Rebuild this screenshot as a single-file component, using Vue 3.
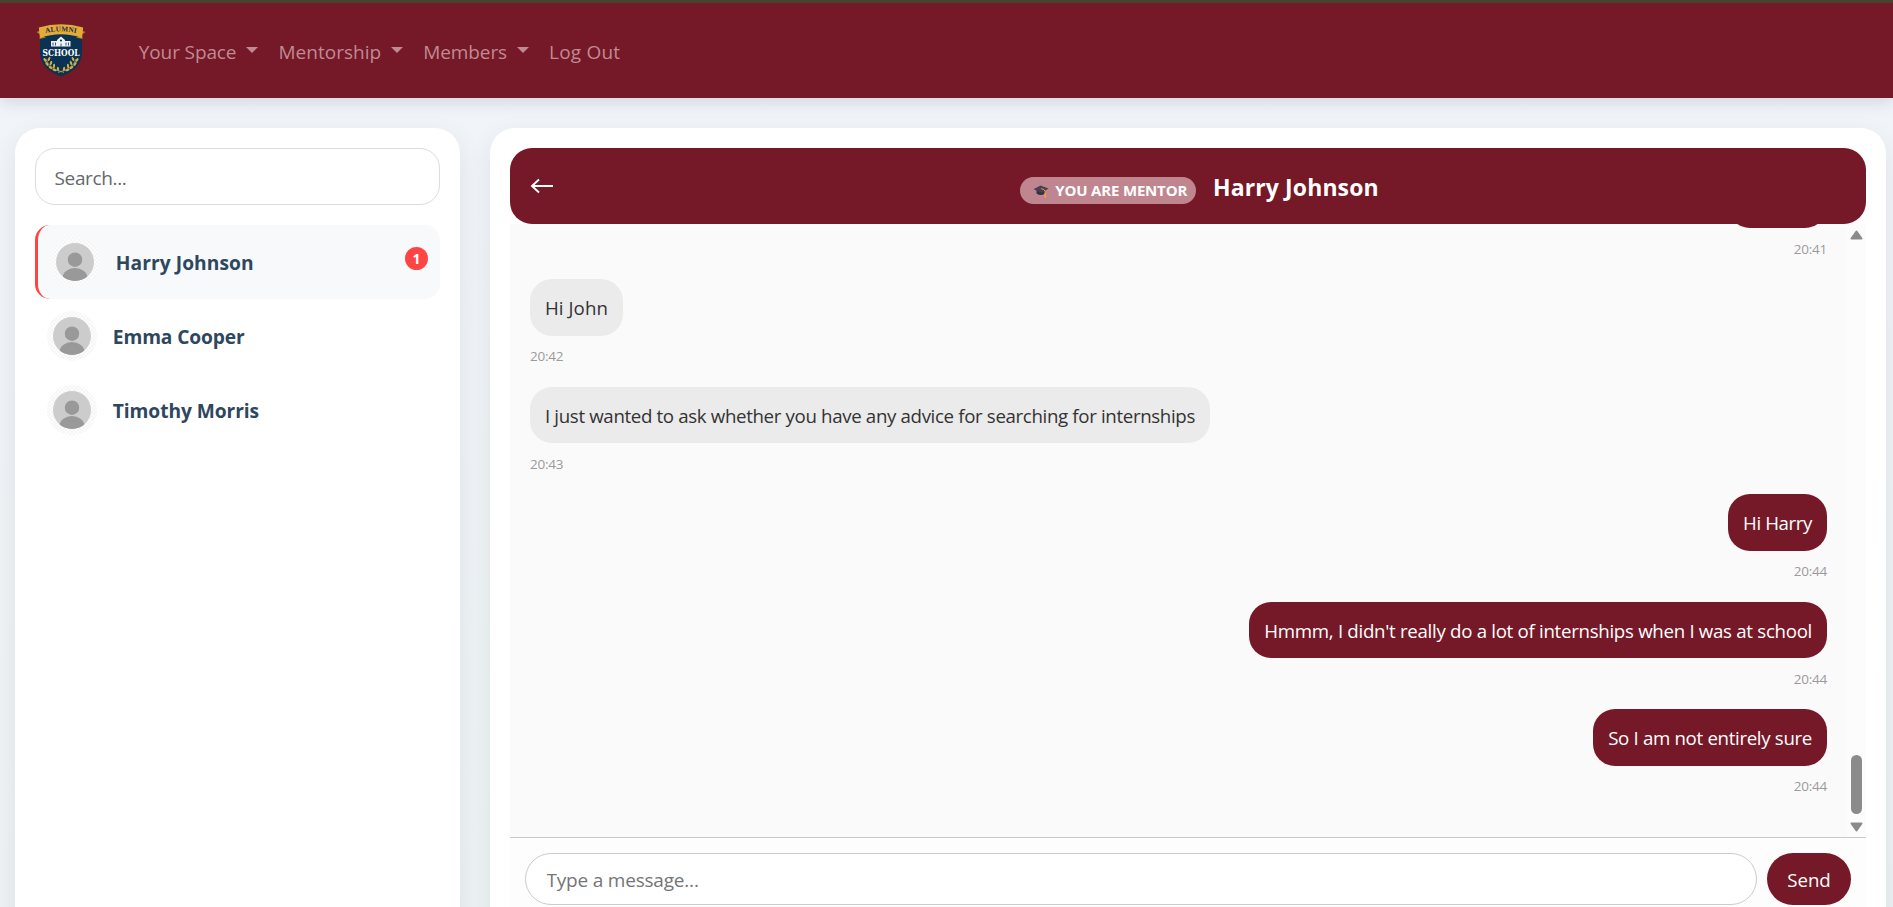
<script setup>
import { ref } from 'vue'

const navItems = [
  { label: 'Your Space', menu: true, tracking: -0.12 },
  { label: 'Mentorship', menu: true, tracking: 0.03 },
  { label: 'Members', menu: true, tracking: -0.08 },
  { label: 'Log Out', menu: false, tracking: 0.2 },
]

const contacts = [
  { name: 'Harry Johnson', unread: 1, active: true, tracking: 0.06 },
  { name: 'Emma Cooper', unread: 0, active: false, tracking: -0.12 },
  { name: 'Timothy Morris', unread: 0, active: false, tracking: -0.08 },
]

const messages = [
  { text: '', time: '20:41', mine: true, tracking: 0 },
  { text: 'Hi John', time: '20:42', mine: false, tracking: 0.06 },
  {
    text: 'I just wanted to ask whether you have any advice for searching for internships',
    time: '20:43',
    mine: false,
    tracking: -0.35,
  },
  { text: 'Hi Harry', time: '20:44', mine: true, tracking: -0.4 },
  {
    text: "Hmmm, I didn't really do a lot of internships when I was at school",
    time: '20:44',
    mine: true,
    tracking: -0.3,
  },
  { text: 'So I am not entirely sure', time: '20:44', mine: true, tracking: -0.33 },
]

const search = ref('')
const draft = ref('')
const leaves = [
  [44, 60, 35], [46, 64, 40], [49.5, 67.5, 55], [53.5, 70, 70],
  [48, 59, -25], [50, 63, -20], [53, 66, -5], [57, 69, 10],
]
</script>

<template>
  <div class="page">
    <header class="nav">
      <svg class="logo" viewBox="36 23 50 55" width="50" height="55">
        <path d="M40 37 Q61 29 82 37 V52 C82 65 73 72 61 76.500 C49 72 40 65 40 52 Z" fill="#0a3353" />
        <path d="M36.500 32 L43 29.500 V36 L46 37.500 L39.500 39 L40 34.500 Z" fill="#b98524" />
        <path d="M85.500 32 L79 29.500 V36 L76 37.500 L82.500 39 L82 34.500 Z" fill="#b98524" />
        <path d="M38.800 27.500 Q61 21 83.200 27.500 L82 38 Q61 30.500 40 38 Z" fill="#e3ab38" />
        <path id="arc" d="M38 35 Q61 27.800 84 35" fill="none" />
        <text class="logo-top" text-anchor="middle"><textPath href="#arc" startOffset="50%">ALUMNI</textPath></text>
        <path d="M51 41 H57 V40 L61 36.500 L65 40 V41 H70.500 V46.500 H51 Z" fill="#eef2f4" />
        <path d="M53 42.500 V45.500 M55.500 42.500 V45.500 M66 42.500 V45.500 M68.500 42.500 V45.500 M61 43.500 V46.500" stroke="#0a3353" stroke-width=".8" />
        <circle cx="61" cy="40.500" r="1.100" fill="#0a3353" />
        <text class="logo-mid" x="42.500" y="55.800" textLength="37" lengthAdjust="spacingAndGlyphs">SCHOOL</text>
        <g fill="#cfae4c">
          <ellipse v-for="(l, i) in leaves" :key="'l' + i" :cx="l[0] + 1" :cy="l[1]" rx="1.100" ry="2.200" :transform="`rotate(${-l[2]} ${l[0] + 1} ${l[1]})`" />
          <ellipse v-for="(l, i) in leaves" :key="'r' + i" :cx="121 - l[0]" :cy="l[1]" rx="1.100" ry="2.200" :transform="`rotate(${l[2]} ${121 - l[0]} ${l[1]})`" />
        </g>
        <path d="M46 59 Q49 69 64 72.500 M76 59 Q73 69 58 72.500" fill="none" stroke="#cfae4c" stroke-width=".7" />
      </svg>
      <nav class="links">
        <a v-for="item in navItems" :key="item.label" class="link">
          <span :style="{ letterSpacing: item.tracking + 'px' }">{{ item.label }}</span>
          <i v-if="item.menu" class="caret"></i>
        </a>
      </nav>
    </header>

    <main class="content">
      <aside class="panel sidebar">
        <input v-model="search" class="search" placeholder="Search..." />
        <div v-for="c in contacts" :key="c.name" class="contact" :class="{ active: c.active }">
          <div class="avatar">
            <svg viewBox="0 0 38 38" width="38" height="38">
              <clipPath id="face"><circle cx="19" cy="19" r="19" /></clipPath>
              <g clip-path="url(#face)">
                <rect width="38" height="38" fill="#ccc" />
                <ellipse cx="19" cy="35" rx="12.500" ry="10" fill="#999" />
                <circle cx="19" cy="16.700" r="7.200" fill="#999" />
              </g>
            </svg>
          </div>
          <span class="name" :style="{ letterSpacing: c.tracking + 'px' }">{{ c.name }}</span>
          <span v-if="c.unread" class="unread">{{ c.unread }}</span>
        </div>
      </aside>

      <section class="panel chat">
        <div class="chat-head">
          <svg class="back" viewBox="0 0 23 16" width="23" height="16">
            <path d="M23 8 H2 M9 1.500 L2 8 L9 14.500" fill="none" stroke="#fff" stroke-width="1.900" />
          </svg>
          <div class="chat-title">
            <span class="role">
              <svg viewBox="0 0 16 14" width="16" height="14">
                <path d="M3.500 5 V9.500 Q8 12.500 12 9.500 V5 Z" fill="#343047" />
                <path d="M0.500 5.200 L7.500 1.500 L15.500 4.600 L8.500 9 Z" fill="#463f55" />
                <path d="M8 4.600 Q12 5 12 7.500 V10" fill="none" stroke="#e8962e" stroke-width="1" />
                <path d="M11.300 9.500 H13 L13.300 13.500 H11.300 Z" fill="#f0a044" />
              </svg>
              <span class="role-text">YOU ARE MENTOR</span>
            </span>
            <h2>Harry Johnson</h2>
          </div>
        </div>

        <div class="chat-body">
          <div class="messages">
            <div v-for="(m, i) in messages" :key="i" class="message" :class="{ mine: m.mine }">
              <div class="bubble" :style="{ letterSpacing: m.tracking + 'px' }">{{ m.text }}</div>
              <time>{{ m.time }}</time>
            </div>
          </div>
          <div class="scrollbar">
            <svg viewBox="0 0 13 10" width="13" height="10">
              <path d="M6.500 1.500 L11.500 8.500 H1.500 Z" fill="#8b8b8b" stroke="#8b8b8b" stroke-width="2" stroke-linejoin="round" />
            </svg>
            <div class="thumb"></div>
            <svg viewBox="0 0 13 10" width="13" height="10">
              <path d="M6.500 8.500 L11.500 1.500 H1.500 Z" fill="#8b8b8b" stroke="#8b8b8b" stroke-width="2" stroke-linejoin="round" />
            </svg>
          </div>
        </div>

        <div class="composer">
          <input v-model="draft" placeholder="Type a message..." />
          <button>Send</button>
        </div>
      </section>
    </main>
  </div>
</template>

<style>
body {
  overflow: hidden;
}
</style>

<style scoped>
.page,
.page * {
  box-sizing: border-box;
}
.page {
  height: 907px;
  overflow: hidden;
  display: flex;
  flex-direction: column;
  background: linear-gradient(180deg, #f1f5f9, #edf2f5);
  font-family: "Open Sans", "Noto Sans", sans-serif;
  font-size: 19px;
}
.nav {
  position: relative;
  z-index: 1;
  flex: none;
  height: 98px;
  border-top: 3px solid #46442e;
  background: #751827;
  box-shadow: 0 4px 16px rgba(0, 0, 0, 0.13);
  display: flex;
  align-items: center;
  padding: 0 36px;
}
.logo {
  flex: none;
  margin-right: 52.800px;
  overflow: visible;
}
.logo-top {
  font: 700 7.200px "Liberation Serif", serif;
  letter-spacing: 0.200px;
  fill: #173049;
}
.logo-mid {
  font: 700 10px "DejaVu Serif", serif;
  fill: #fff;
}
.links {
  display: flex;
  gap: 20px;
  margin-top: 3px;
}
.link {
  display: flex;
  align-items: center;
  color: #c08a93;
  line-height: 30px;
  white-space: nowrap;
}
.caret {
  margin: 0 0 4px 10px;
  border: 6px solid transparent;
  border-top-color: #c08a93;
  border-bottom: 0;
}
.content {
  flex: 1;
  display: flex;
  gap: 30px;
  padding: 30px 7px 0 15px;
}
.panel {
  height: 815px;
  background: #fff;
  border-radius: 25px;
  padding: 20px;
  box-shadow: 0 8px 26px rgba(0, 0, 0, 0.08);
}
.sidebar {
  flex: none;
  width: 445px;
}
input {
  display: block;
  min-width: 0;
  margin: 0;
  background: #fff;
  font: inherit;
  outline: none;
}
input::placeholder {
  opacity: 1;
}
.search {
  width: 100%;
  height: 57px;
  margin-bottom: 20px;
  padding: 2px 18.500px 0;
  border: 1px solid #dcdcdc;
  border-radius: 20px;
  letter-spacing: -0.350px;
}
.search::placeholder {
  color: #65686d;
}
.contact {
  display: flex;
  align-items: center;
  height: 74px;
  padding: 0 12px;
  border-radius: 15px;
}
.contact.active {
  border-left: 3px solid #ff4444;
  background: #f8f9fb;
}
.avatar {
  width: 50px;
  height: 50px;
  padding: 6px;
  border-radius: 50%;
  background: repeating-conic-gradient(#f5f5f5 0 25%, #fdfdfd 0 50%) 0 0 / 4px 4px;
}
.avatar svg {
  display: block;
}
.name {
  flex: 1;
  margin: 1px 0 0 15.800px;
  font-size: 19.200px;
  font-weight: 700;
  color: #2e475f;
}
.unread {
  width: 23px;
  height: 23px;
  margin-bottom: 7px;
  border-radius: 50%;
  background: #ff4444;
  color: #fff;
  font-size: 14px;
  font-weight: 700;
  line-height: 23px;
  text-align: center;
}
.chat {
  flex: 1;
  display: flex;
  flex-direction: column;
}
.chat-head {
  flex: none;
  display: flex;
  align-items: center;
  height: 76px;
  padding: 0 20px;
  border-radius: 22px;
  background: #751827;
  color: #fff;
}
.back {
  flex: none;
}
.chat-title {
  flex: 1;
  display: flex;
  align-items: center;
  justify-content: center;
  gap: 16.800px;
}
.role {
  display: flex;
  align-items: center;
  height: 27px;
  width: 176px;
  margin-top: 9px;
  padding-left: 13px;
  gap: 6px;
  border-radius: 14px;
  background: #bf8690;
  font-size: 15px;
  font-weight: 700;
  letter-spacing: -0.180px;
  white-space: nowrap;
}
.role-text {
  margin-bottom: 1px;
}
h2 {
  margin: 2px 0 0;
  font-size: 23px;
  font-weight: 700;
  letter-spacing: 0.100px;
  white-space: nowrap;
}
.chat-body {
  flex: none;
  height: 613px;
  display: flex;
  background: #fafafa;
}
.messages {
  flex: 1;
  display: flex;
  flex-direction: column;
  justify-content: flex-end;
  overflow: hidden;
  padding: 0 20px 20.500px;
}
.message {
  flex: none;
  height: 107.500px;
  display: flex;
  flex-direction: column;
  align-items: flex-start;
}
.message.mine {
  align-items: flex-end;
}
.bubble {
  height: 56.500px;
  min-width: 93px;
  padding: 0 15px;
  border-radius: 22px;
  background: #ebebeb;
  color: #333;
  font-size: 18.700px;
  line-height: 57px;
  white-space: nowrap;
}
.bubble:empty {
  min-width: 99px;
}
.mine .bubble {
  background: #751827;
  color: #fff;
}
time {
  margin-top: 10.500px;
  font-size: 13.500px;
  line-height: 20px;
  letter-spacing: -0.250px;
  color: #9b9b9b;
}
.scrollbar {
  flex: none;
  width: 19px;
  padding: 6px 3px 5px;
  background: #fcfcfc;
  display: flex;
  flex-direction: column;
  align-items: center;
}
.thumb {
  width: 11px;
  height: 59px;
  margin: auto 0 8px;
  border-radius: 6px;
  background: #8b8b8b;
}
.composer {
  flex: none;
  display: flex;
  gap: 10px;
  height: 86px;
  padding: 15px 15px 0;
  border-top: 1px solid #c9c9c9;
  background: #fdfdfd;
}
.composer input {
  flex: 1;
  height: 52px;
  padding: 1px 20px 0 20.500px;
  border: 1px solid #ccc;
  border-radius: 26px;
  letter-spacing: -0.200px;
}
.composer input::placeholder {
  color: #757575;
}
button {
  width: 84px;
  height: 52px;
  padding: 0;
  border: 0;
  border-radius: 26px;
  background: #751827;
  color: #fff;
  font: inherit;
  font-size: 18.700px;
}
</style>
